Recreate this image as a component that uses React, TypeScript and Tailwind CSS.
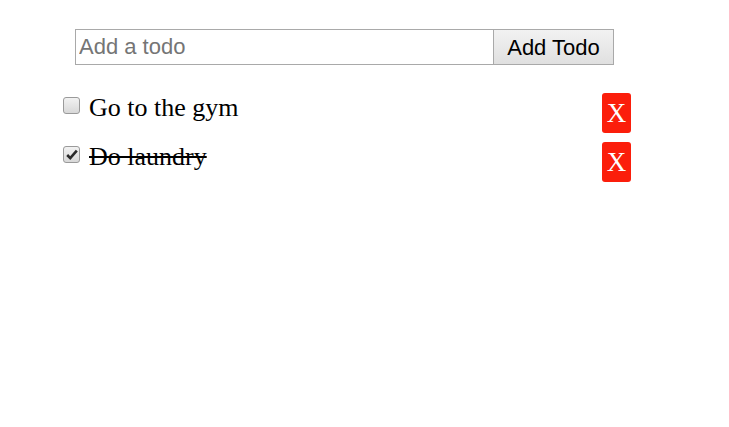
import React, { useState } from 'react';

type Todo = { id: number; text: string; done: boolean };

export default function App() {
  const [todos, setTodos] = useState<Todo[]>([
    { id: 1, text: 'Go to the gym', done: false },
    { id: 2, text: 'Do laundry', done: true },
  ]);
  const [draft, setDraft] = useState('');

  const toggle = (id: number) =>
    setTodos(todos.map((t) => (t.id === id ? { ...t, done: !t.done } : t)));
  const remove = (id: number) => setTodos(todos.filter((t) => t.id !== id));
  const add = () => {
    if (!draft.trim()) return;
    setTodos([...todos, { id: Date.now(), text: draft, done: false }]);
    setDraft('');
  };

  return (
    <div className="min-h-screen bg-white font-['Liberation_Serif',serif] text-black">
      {/* Form */}
      <div className="flex pl-[75px] pt-[29px]">
        <input
          value={draft}
          onChange={(e) => setDraft(e.target.value)}
          placeholder="Add a todo"
          className="w-[419px] h-[36px] border border-[#a9a9a9] px-[3px] text-[22px] font-['Liberation_Sans',sans-serif] placeholder:text-[#757575] outline-none"
        />
        <button
          onClick={add}
          className="w-[120px] h-[36px] border border-[#a9a9a9] border-l-0 bg-gradient-to-b from-[#f2f2f2] to-[#e0e0e0] text-[22px] font-['Liberation_Sans',sans-serif]"
        >
          Add Todo
        </button>
      </div>

      {/* List */}
      <ul className="mt-[28px] flex flex-col gap-[9px] pl-[63px] w-[631px]">
        {todos.map((t) => (
          <li key={t.id} className="flex items-start justify-between h-[40px]">
            <div className="flex items-start gap-[9px]">
              <button
                onClick={() => toggle(t.id)}
                className="mt-[4px] w-[17px] h-[17px] rounded-[3px] border border-[#9a9a9a] bg-gradient-to-b from-[#f2f2f2] to-[#d8d8d8] flex items-center justify-center"
              >
                {t.done && (
                  <svg viewBox="0 0 16 16" className="w-[14px] h-[14px]">
                    <path d="M2.5 8 L6 11.5 L13.5 3" fill="none" stroke="#2a2a2a" strokeWidth="3" />
                  </svg>
                )}
              </button>
              <span className={`text-[26px] leading-[30px] ${t.done ? 'line-through' : ''}`}>{t.text}</span>
            </div>
            <button
              onClick={() => remove(t.id)}
              className="w-[29px] h-[40px] rounded-[3px] bg-[#fb1e0b] text-white text-[27px] leading-none"
            >
              X
            </button>
          </li>
        ))}
      </ul>
    </div>
  );
}
